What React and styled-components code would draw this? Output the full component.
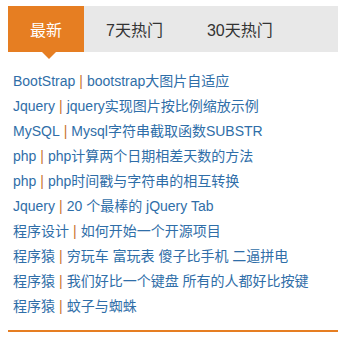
import React, { useState } from "react";
import styled, { createGlobalStyle } from "styled-components";

const GlobalStyle = createGlobalStyle`
    body {
        margin: 0;
        background: #fff;
        font-family: "Liberation Sans", "Noto Sans CJK SC", sans-serif;
    }
`;

const tabs = ["最新", "7天热门", "30天热门"];

const items = [
    ["BootStrap", "bootstrap大图片自适应"],
    ["Jquery", "jquery实现图片按比例缩放示例"],
    ["MySQL", "Mysql字符串截取函数SUBSTR"],
    ["php", "php计算两个日期相差天数的方法"],
    ["php", "php时间戳与字符串的相互转换"],
    ["Jquery", "20 个最棒的 jQuery Tab"],
    ["程序设计", "如何开始一个开源项目"],
    ["程序猿", "穷玩车 富玩表 傻子比手机 二逼拼电"],
    ["程序猿", "我们好比一个键盘 所有的人都好比按键"],
    ["程序猿", "蚊子与蜘蛛"],
];

export default function App() {
    const [active, setActive] = useState(0);

    return (
        <>
            <GlobalStyle />
            <Panel>
                <TabBar>
                    {tabs.map((t, i) => (
                        <Tab key={t} active={i === active} onClick={() => setActive(i)}>
                            {t}
                        </Tab>
                    ))}
                </TabBar>
                <List>
                    {items.map(([cat, title], i) => (
                        <Row key={i}>
                            <a href="#">{cat}</a>
                            <Sep>|</Sep>
                            <a href="#">{title}</a>
                        </Row>
                    ))}
                </List>
            </Panel>
        </>
    );
}

const Panel = styled.div`
    width: 330px;
    margin: 6px 0 0 8px;
    border-bottom: 2px solid #e67e22;
`;

const TabBar = styled.div`
    display: flex;
    height: 46px;
    background: #e8e8e8;
`;

const Tab = styled.div`
    position: relative;
    display: flex;
    align-items: center;
    padding: 0 22px;
    font-size: 16px;
    color: ${(p) => (p.active ? "#fff" : "#333")};
    background: ${(p) => (p.active ? "#e67e22" : "transparent")};
    cursor: pointer;

    &::after {
        content: "";
        display: ${(p) => (p.active ? "block" : "none")};
        position: absolute;
        left: 34px;
        top: 100%;
        border: 7px solid transparent;
        border-top-color: #e67e22;
        border-bottom: 0;
    }
`;

const List = styled.ul`
    list-style: none;
    margin: 0;
    padding: 17px 5px 11px;
`;

const Row = styled.li`
    font-size: 14px;
    line-height: 25px;
    white-space: nowrap;

    a {
        color: #2f6ea8;
        text-decoration: none;
    }
`;

const Sep = styled.span`
    color: #c8742e;
    margin: 0 4px;
`;
